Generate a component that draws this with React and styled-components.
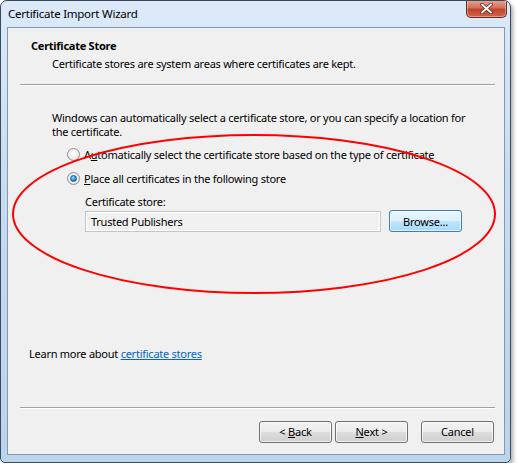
import React from 'react'
import styled, { createGlobalStyle } from 'styled-components'

const GlobalStyle = createGlobalStyle`
  html, body {
    margin: 0;
    padding: 0;
    background: #ffffff;
  }
  body {
    font-family: 'Noto Sans', 'Open Sans', sans-serif;
    font-size: 11px;
    letter-spacing: -0.25px;
    color: #000;
  }
`

const Window = styled.div`
  position: relative;
  width: 509px;
  height: 461px;
  border: 1px solid #3a4a5e;
  border-radius: 7px 7px 5px 5px;
  background: linear-gradient(180deg, #dceaf8 0%, #c7dbf1 40%, #bcd3ec 100%);
  box-shadow: 2px 3px 4px rgba(0, 0, 0, 0.35);
  display: flex;
  flex-direction: column;
  overflow: hidden;
`

const TitleBar = styled.div`
  height: 26px;
  display: flex;
  align-items: center;
  justify-content: space-between;
  padding-left: 7px;
`

const Title = styled.span`
  font-size: 11.5px;
  color: #000;
  margin-top: -1px;
`

const CloseButton = styled.div`
  align-self: flex-start;
  width: 39px;
  height: 17px;
  margin-right: 3px;
  margin-top: -1px;
  border: 1px solid #6b2a22;
  border-top: none;
  border-radius: 0 0 5px 5px;
  background: linear-gradient(180deg, #e8a493 0%, #d3705a 45%, #c0432c 55%, #d2644a 100%);
  display: flex;
  align-items: center;
  justify-content: center;
  box-shadow: inset 0 0 0 1px rgba(255, 255, 255, 0.35);
`

const Client = styled.div`
  flex: 1;
  margin: 0 5px 7px 6px;
  border: 1px solid #8397b0;
  background: #f0f0f0;
  display: flex;
  flex-direction: column;
`

const Header = styled.div`
  padding: 10px 0 0 23px;
  height: 46px;
`

const HeaderTitle = styled.div`
  font-weight: bold;
  line-height: 16px;
`

const HeaderText = styled.div`
  margin-top: 2px;
  padding-left: 21px;
  line-height: 16px;
`

const Separator = styled.div`
  margin: 0 9px 0 12px;
  height: 1px;
  background: #a0a0a0;
  border-bottom: 1px solid #ffffff;
`

const Body = styled.div`
  flex: 1;
  padding: 25px 0 0 44px;
  display: flex;
  flex-direction: column;
`

const Paragraph = styled.div`
  line-height: 14px;
  width: 430px;
`

const RadioList = styled.div`
  margin-top: 7px;
  padding-left: 15px;
  display: flex;
  flex-direction: column;
  gap: 8px;
`

const RadioRow = styled.label`
  display: flex;
  align-items: center;
  gap: 4px;
  height: 16px;
`

const RadioDot = styled.span`
  width: 11px;
  height: 11px;
  border-radius: 50%;
  border: 1px solid #8e8f8f;
  background: radial-gradient(circle at 50% 40%, #ffffff 0%, #ececec 60%, #d4d4d4 100%);
  display: flex;
  align-items: center;
  justify-content: center;

  &::after {
    content: '';
    width: ${p => (p.checked ? '5px' : '0')};
    height: ${p => (p.checked ? '5px' : '0')};
    border-radius: 50%;
    background: radial-gradient(circle at 40% 35%, #9ce0ff 0%, #2a8ed0 55%, #0b4f8a 100%);
    border: ${p => (p.checked ? '1px solid #1b5f95' : 'none')};
  }
`

const Underline = styled.span`
  text-decoration: underline;
`

const StoreBlock = styled.div`
  margin-top: 8px;
  padding-left: 33px;
  display: flex;
  flex-direction: column;
  gap: 1px;
`

const StoreRow = styled.div`
  display: flex;
  align-items: center;
  gap: 8px;
`

const StoreInput = styled.div`
  width: 289px;
  height: 19px;
  border: 1px solid #c2c6cc;
  box-shadow: inset 0 0 0 1px #ffffff;
  background: #f0f0f0;
  padding-left: 5px;
  display: flex;
  align-items: center;
`

const Button = styled.button`
  width: ${p => p.width || 73}px;
  height: 22px;
  font-family: inherit;
  font-size: 11px;
  letter-spacing: -0.2px;
  color: #000;
  border-radius: 3px;
  padding: 0;
  border: 1px solid ${p => (p.active ? '#3c7fb1' : '#707070')};
  background: ${p =>
    p.active
      ? 'linear-gradient(180deg, #eaf6fd 0%, #d9f0fc 50%, #bee6fd 51%, #a7d9f5 100%)'
      : 'linear-gradient(180deg, #f2f2f2 0%, #ebebeb 50%, #dddddd 51%, #cfcfcf 100%)'};
  box-shadow: inset 0 0 0 1px rgba(255, 255, 255, 0.7);
`

const LearnMore = styled.div`
  margin-top: auto;
  margin-bottom: 46px;
  margin-left: -23px;
`

const Link = styled.a`
  color: #0066cc;
  text-decoration: underline;
`

const Footer = styled.div`
  height: 45px;
  display: flex;
  align-items: center;
  justify-content: flex-end;
  padding-right: 10px;
`

const ButtonGroup = styled.div`
  display: flex;
  gap: 3px;
  margin-right: 13px;
`

const Annotation = styled.svg`
  position: absolute;
  left: 0;
  top: 0;
  pointer-events: none;
`

export default function App() {
  return (
    <>
      <GlobalStyle />
      <Window>
        <TitleBar>
          <Title>Certificate Import Wizard</Title>
          <CloseButton>
            <svg width="13" height="11" viewBox="0 0 13 11">
              <path
                d="M2 1.5 L11 9.5 M11 1.5 L2 9.5"
                stroke="#5a2a24"
                strokeWidth="3.6"
                strokeLinecap="round"
              />
              <path
                d="M2 1.5 L11 9.5 M11 1.5 L2 9.5"
                stroke="#f4f4f4"
                strokeWidth="2"
                strokeLinecap="round"
              />
            </svg>
          </CloseButton>
        </TitleBar>
        <Client>
          <Header>
            <HeaderTitle>Certificate Store</HeaderTitle>
            <HeaderText>Certificate stores are system areas where certificates are kept.</HeaderText>
          </Header>
          <Separator />
          <Body>
            <Paragraph>
              Windows can automatically select a certificate store, or you can specify a location for
              the certificate.
            </Paragraph>
            <RadioList>
              <RadioRow>
                <RadioDot />
                <span>
                  A<Underline>u</Underline>tomatically select the certificate store based on the type of
                  certificate
                </span>
              </RadioRow>
              <RadioRow>
                <RadioDot checked />
                <span>
                  <Underline>P</Underline>lace all certificates in the following store
                </span>
              </RadioRow>
            </RadioList>
            <StoreBlock>
              <span>Certificate store:</span>
              <StoreRow>
                <StoreInput>Trusted Publishers</StoreInput>
                <Button active>Browse...</Button>
              </StoreRow>
            </StoreBlock>
            <LearnMore>
              Learn more about <Link href="#">certificate stores</Link>
            </LearnMore>
          </Body>
          <Separator />
          <Footer>
            <ButtonGroup>
              <Button>
                &lt; <Underline>B</Underline>ack
              </Button>
              <Button>
                <Underline>N</Underline>ext &gt;
              </Button>
            </ButtonGroup>
            <Button>Cancel</Button>
          </Footer>
        </Client>
        <Annotation width="511" height="463" viewBox="0 0 511 463">
          <ellipse cx="253" cy="213" rx="241" ry="79" fill="none" stroke="#ff0000" strokeWidth="2" />
        </Annotation>
      </Window>
    </>
  )
}
